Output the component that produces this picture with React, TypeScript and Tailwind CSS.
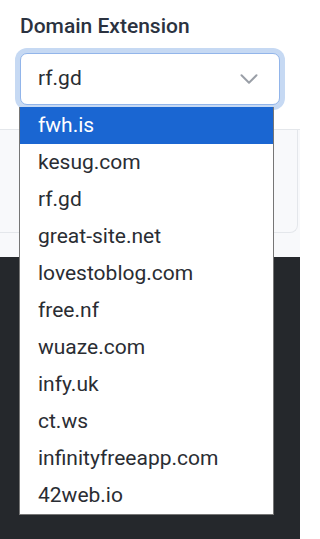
import { ChevronDown } from "lucide-react";

const domains = [
  "fwh.is",
  "kesug.com",
  "rf.gd",
  "great-site.net",
  "lovestoblog.com",
  "free.nf",
  "wuaze.com",
  "infy.uk",
  "ct.ws",
  "infinityfreeapp.com",
  "42web.io",
];

export default function App() {
  return (
    <div className="relative flex h-[539px] w-[300px] flex-col overflow-hidden bg-white font-['Roboto',sans-serif]">
      {/* form header */}
      <div className="h-[130px] shrink-0 border-b border-[#e4e7eb] px-5 pt-[13px]">
        <label className="block text-[21px] font-medium leading-[27px] text-[#2b3240]">
          Domain Extension
        </label>
        <div className="mt-[13px] flex h-[52px] items-center justify-between rounded-[7px] border border-[#92b5ea] bg-white pl-[17px] pr-[15px] ring-[5px] ring-[#c6d9f3]">
          <span className="text-[21px] text-[#2a2d33]">rf.gd</span>
          <ChevronDown className="h-[30px] w-[30px] text-[#9a9fa7]" strokeWidth={1.6} />
        </div>
      </div>

      {/* card area */}
      <div className="h-[127px] shrink-0 bg-[#f8f9fb]">
        <div className="-ml-2 mr-[2px] h-[103px] rounded-b-lg border border-t-0 border-[#e4e7eb]" />
      </div>

      {/* footer */}
      <div className="flex-1 bg-[#25282c]" />

      {/* open dropdown */}
      <ul className="absolute left-[19px] top-[107px] w-[255px] border border-t-0 border-[#767676] bg-white">
        {domains.map((d, i) => (
          <li
            key={d}
            className={
              i === 0
                ? "flex h-[37px] items-center bg-[#1a66d2] pl-[18px] text-[21px] text-white"
                : "flex h-[37px] items-center pl-[18px] text-[21px] text-[#2a2d33]"
            }
          >
            {d}
          </li>
        ))}
      </ul>
    </div>
  );
}
